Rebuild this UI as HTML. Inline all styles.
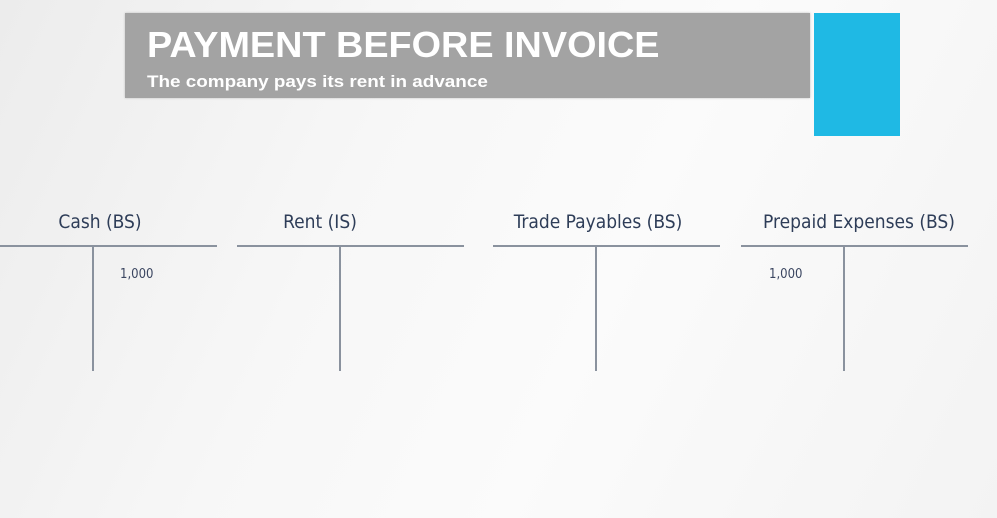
<!DOCTYPE html>
<html><head><style>
body{margin:0;width:997px;height:518px;overflow:hidden;position:relative;background:linear-gradient(115deg,#ececec 0%,#f7f7f7 35%,#fbfbfb 60%,#f3f3f3 100%);font-family:"Liberation Sans",sans-serif}
.g{position:absolute;left:125px;top:13px;width:685px;height:85px;background:#a3a3a3;box-shadow:0 0 2px #bbb}
.g h1{position:absolute;left:22px;top:11px;margin:0;color:#fff;font-size:36px;font-weight:bold;white-space:nowrap;transform:scaleX(1.05);transform-origin:left}
.g p{position:absolute;left:22px;top:59px;margin:0;color:#fff;font-size:17px;font-weight:bold;white-space:nowrap;transform:scaleX(1.11);transform-origin:left}
.c{position:absolute;left:814px;top:13px;width:86px;height:123px;background:#1fb9e4}
.h{position:absolute;top:245px;height:2px;background:#8a929e}
.v{position:absolute;top:246px;width:2px;height:125px;background:#8a929e}
.l{position:absolute;top:211px;color:#2e3d58;font-size:19px;text-align:center;font-family:"DejaVu Sans Condensed","Liberation Sans",sans-serif}
.n{position:absolute;top:267px;color:#3a4560;font-size:13px;font-family:"DejaVu Sans Condensed","Liberation Sans",sans-serif}
</style></head><body>
<div class="g"><h1>PAYMENT BEFORE INVOICE</h1><p>The company pays its rent in advance</p></div>
<div class="c"></div>
<div class="l" style="left:0;width:200px">Cash (BS)</div>
<div class="l" style="left:220px;width:200px">Rent (IS)</div>
<div class="l" style="left:498px;width:200px">Trade Payables (BS)</div>
<div class="l" style="left:759px;width:200px">Prepaid Expenses (BS)</div>
<div class="h" style="left:0;width:217px"></div>
<div class="h" style="left:237px;width:227px"></div>
<div class="h" style="left:493px;width:227px"></div>
<div class="h" style="left:741px;width:227px"></div>
<div class="v" style="left:92px"></div>
<div class="v" style="left:339px"></div>
<div class="v" style="left:595px"></div>
<div class="v" style="left:843px"></div>
<div class="n" style="left:120px">1,000</div>
<div class="n" style="left:769px">1,000</div>
</body></html>
